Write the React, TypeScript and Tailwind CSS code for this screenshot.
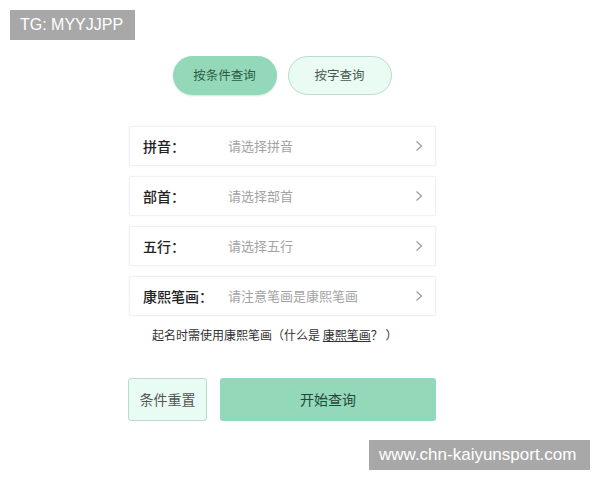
import React from 'react';

const cjk = { fontFamily: '"Noto Sans CJK SC", "Noto Sans", sans-serif' };

const rows = [
  { label: '拼音：', placeholder: '请选择拼音' },
  { label: '部首：', placeholder: '请选择部首' },
  { label: '五行：', placeholder: '请选择五行' },
  { label: '康熙笔画：', placeholder: '请注意笔画是康熙笔画' },
];

const Chevron = () => (
  <svg width="8" height="12" viewBox="0 0 8 12" fill="none">
    <polyline points="1.5,1.5 6.5,6 1.5,10.5" stroke="#9a9a9a" strokeWidth="1.2" />
  </svg>
);

const App = () => {
  return (
    <div className="relative w-[600px] h-[480px] bg-white overflow-hidden" style={cjk}>
      <div className="ml-[128px] w-[308px] pt-[56px]">
        <div className="flex justify-center gap-[11px]">
          <button className="w-[104px] h-[39px] rounded-full bg-[#93d9b9] text-[12.5px] text-[#2d5a44] shadow-[0_1px_2px_rgba(80,160,120,0.25)]">
            按条件查询
          </button>
          <button className="w-[104px] h-[39px] rounded-full bg-[#e9fbf3] border border-[#bcdccb] text-[12.5px] text-[#4a5a52]">
            按字查询
          </button>
        </div>

        <div className="mt-[31px] flex flex-col gap-[10px]">
          {rows.map((row) => (
            <div
              key={row.label}
              className="h-[40px] ml-[1px] flex items-center pl-[13px] pr-[12px] border border-[#f1f1f1] shadow-[0_0_2px_rgba(0,0,0,0.05)] bg-white"
            >
              <span className="w-[85px] text-[14px] font-medium text-[#222]">{row.label}</span>
              <span className="flex-1 text-[13px] text-[#a3a3a3]">{row.placeholder}</span>
              <Chevron />
            </div>
          ))}
        </div>

        <p className="mt-[10px] pl-[24px] text-[12px] text-[#333]">
          起名时需使用康熙笔画（什么是 <span className="underline">康熙笔画</span>？ ）
        </p>

        <div className="mt-[34px] flex gap-[13px]">
          <button className="w-[79px] h-[43px] rounded-[3px] bg-[#e9fcf4] border border-[#b7dcc9] text-[14px] text-[#555]">
            条件重置
          </button>
          <button className="w-[216px] h-[43px] rounded-[3px] bg-[#93d8b8] text-[14px] text-[#27453a]">
            开始查询
          </button>
        </div>
      </div>

      <div
        className="absolute left-[10px] top-[10px] w-[125px] h-[30px] bg-[#a8a8a8] text-white text-[16px] leading-[30px] pl-[10px]"
        style={{ fontFamily: '"Liberation Sans", Arial, sans-serif' }}
      >
        TG: MYYJJPP
      </div>
      <div
        className="absolute left-[369px] top-[440px] w-[221px] h-[30px] bg-[#a8a8a8] text-white text-[17px] leading-[30px] pl-[10px]"
        style={{ fontFamily: '"Liberation Sans", Arial, sans-serif' }}
      >
        www.chn-kaiyunsport.com
      </div>
    </div>
  );
};

export default App;
